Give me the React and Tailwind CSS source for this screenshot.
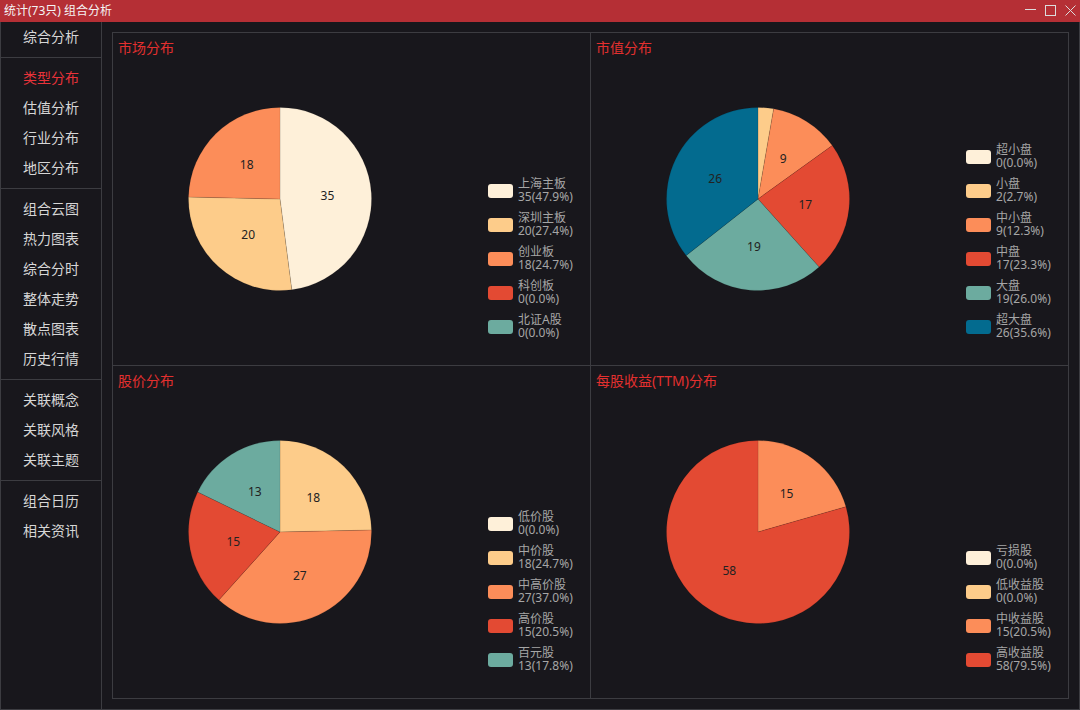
import React from 'react';

const C = {
  cream: '#fef0d9',
  sand: '#fdcc8a',
  orange: '#fc8d59',
  red: '#e34a33',
  teal: '#6cab9f',
  blue: '#036b8f',
};

const PANELS = [
  {
    title: '市场分布',
    items: [
      { name: '上海主板', value: 35, color: C.cream },
      { name: '深圳主板', value: 20, color: C.sand },
      { name: '创业板', value: 18, color: C.orange },
      { name: '科创板', value: 0, color: C.red },
      { name: '北证A股', value: 0, color: C.teal },
    ],
  },
  {
    title: '市值分布',
    items: [
      { name: '超小盘', value: 0, color: C.cream },
      { name: '小盘', value: 2, color: C.sand },
      { name: '中小盘', value: 9, color: C.orange },
      { name: '中盘', value: 17, color: C.red },
      { name: '大盘', value: 19, color: C.teal },
      { name: '超大盘', value: 26, color: C.blue },
    ],
  },
  {
    title: '股价分布',
    items: [
      { name: '低价股', value: 0, color: C.cream },
      { name: '中价股', value: 18, color: C.sand },
      { name: '中高价股', value: 27, color: C.orange },
      { name: '高价股', value: 15, color: C.red },
      { name: '百元股', value: 13, color: C.teal },
    ],
  },
  {
    title: '每股收益(TTM)分布',
    items: [
      { name: '亏损股', value: 0, color: C.cream },
      { name: '低收益股', value: 0, color: C.sand },
      { name: '中收益股', value: 15, color: C.orange },
      { name: '高收益股', value: 58, color: C.red },
    ],
  },
];

const NAV = [
  ['综合分析'],
  ['类型分布', '估值分析', '行业分布', '地区分布'],
  ['组合云图', '热力图表', '综合分时', '整体走势', '散点图表', '历史行情'],
  ['关联概念', '关联风格', '关联主题'],
  ['组合日历', '相关资讯'],
];

// point on circle, angle in degrees clockwise from 12 o'clock
const pt = (cx, cy, r, deg) => {
  const a = (deg * Math.PI) / 180;
  return [cx + r * Math.sin(a), cy - r * Math.cos(a)];
};

function Pie({ items }) {
  const size = 184;
  const cx = 92;
  const cy = 92;
  const r = 91.5;
  const total = items.reduce((s, i) => s + i.value, 0);
  let start = 0;
  const slices = items
    .filter((i) => i.value > 0)
    .map((i) => {
      const sweep = (i.value / total) * 360;
      const a0 = start;
      const a1 = start + sweep;
      start = a1;
      const [x0, y0] = pt(cx, cy, r, a0);
      const [x1, y1] = pt(cx, cy, r, a1);
      const large = sweep > 180 ? 1 : 0;
      const d = `M${cx},${cy} L${x0},${y0} A${r},${r} 0 ${large} 1 ${x1},${y1} Z`;
      const [lx, ly] = pt(cx, cy, r * 0.52, (a0 + a1) / 2);
      // tiny slices get no label
      return { ...i, d, lx, ly, showLabel: sweep >= 12 };
    });

  return (
    <svg width={size} height={size} viewBox={`0 0 ${size} ${size}`}>
      {slices.map((s) => (
        <path key={s.name} d={s.d} fill={s.color} stroke="rgba(0,0,0,0.25)" strokeWidth="0.4" />
      ))}
      {slices
        .filter((s) => s.showLabel)
        .map((s) => (
          <text
            key={s.name + 'l'}
            x={s.lx}
            y={s.ly}
            fontSize="12"
            fill="#222"
            textAnchor="middle"
            dominantBaseline="central"
            fontFamily="'Noto Sans', sans-serif"
          >
            {s.value}
          </text>
        ))}
    </svg>
  );
}

function Panel({ panel, className }) {
  const total = panel.items.reduce((s, i) => s + i.value, 0);
  return (
    <div className={`relative flex ${className}`}>
      <div className="absolute left-[5px] top-[5px] text-[14px] leading-[20px] text-[#e3302f]">
        {panel.title}
      </div>
      <div className="w-[334px] flex items-center justify-center">
        <Pie items={panel.items} />
      </div>
      <div className="flex flex-col justify-end gap-[9px] pb-[26px] pl-[41px]">
        {panel.items.map((item) => (
          <div key={item.name} className="flex items-center gap-[5px]">
            <div className="w-[25px] h-[14px] rounded-[3px] mt-[1px]" style={{ background: item.color }} />
            <div className="text-[12px] leading-[12.5px] text-[#a6a6a6]">
              <div>{item.name}</div>
              <div>
                {item.value}({((item.value / total) * 100).toFixed(1)}%)
              </div>
            </div>
          </div>
        ))}
      </div>
    </div>
  );
}

export default function App() {
  return (
    <div className="w-[1080px] h-[710px] flex flex-col bg-[#18171c] font-['Noto_Sans','Noto_Sans_CJK_SC',sans-serif] overflow-hidden">
      {/* title bar */}
      <div className="h-[22px] shrink-0 bg-[#b52f35] flex items-start">
        <span className="pl-[4px] text-[12px] leading-[22px] text-[#f4f4f4]">统计(73只) 组合分析</span>
        <div className="ml-auto flex gap-[9px] pt-[5px] pr-[4px] text-[#dcdcdc]">
          <svg width="11" height="11" viewBox="0 0 11 11">
            <line x1="0" y1="4.5" x2="11" y2="4.5" stroke="currentColor" strokeWidth="1" />
          </svg>
          <svg width="11" height="11" viewBox="0 0 11 11">
            <rect x="0.5" y="0.5" width="10" height="10" fill="none" stroke="currentColor" strokeWidth="1" />
          </svg>
          <svg width="11" height="11" viewBox="0 0 11 11">
            <path d="M0.5 0.5 L10.5 10.5 M10.5 0.5 L0.5 10.5" stroke="currentColor" strokeWidth="1" />
          </svg>
        </div>
      </div>

      <div className="flex-1 min-h-0 flex border-x border-b border-[#3c3c41]">
        {/* side menu */}
        <nav className="w-[101px] shrink-0 border-r border-[#3c3c41]">
          {NAV.map((group, gi) => (
            <div key={gi}>
              {gi > 0 && <div className="h-px bg-[#3c3c41] my-[5px]" />}
              {group.map((label) => (
                <div
                  key={label}
                  className={`h-[30px] pb-[2px] flex items-center justify-center text-[14px] ${
                    label === '类型分布' ? 'text-[#e8333a]' : 'text-[#d6d6d6]'
                  }`}
                >
                  {label}
                </div>
              ))}
            </div>
          ))}
        </nav>

        {/* charts */}
        <main className="flex-1 p-[10px]">
          <div className="h-full border border-[#3c3c41] grid grid-cols-[478px_477px] grid-rows-[333px_332px]">
            <Panel panel={PANELS[0]} className="border-r border-b border-[#3c3c41]" />
            <Panel panel={PANELS[1]} className="border-b border-[#3c3c41]" />
            <Panel panel={PANELS[2]} className="border-r border-[#3c3c41]" />
            <Panel panel={PANELS[3]} className="" />
          </div>
        </main>
      </div>
    </div>
  );
}
